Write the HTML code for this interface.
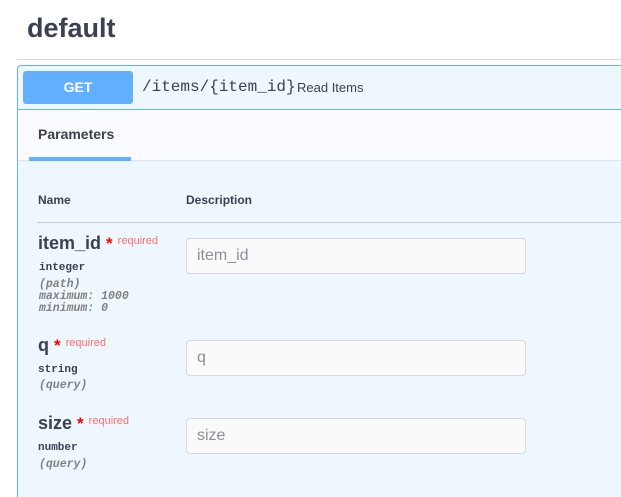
<html style="overflow:hidden;height:497px"><head><style>
body{margin:0;width:621px;height:497px;overflow:hidden;background:#fff;font-family:"Liberation Sans",sans-serif;color:#3b4151;position:relative}
.a{position:absolute}
.mono{font-family:"Liberation Mono",monospace}
.inp{position:absolute;left:186px;height:34px;border:1px solid #d9d9d9;border-radius:4px;background:#fafafa;font-size:16px;color:#8a8f99;box-sizing:content-box;line-height:34px;padding-left:10px;width:328px}
.nm{font-size:18px;font-weight:bold}
.req{color:#ff6f6f;font-size:11px;font-weight:normal}
.star{color:#f00;font-size:17px}
.t{font-size:11px;font-weight:bold;color:#3b4151}
.i{font-size:11.5px;font-style:italic;color:#808080;font-weight:bold;line-height:12px}
</style></head><body>
<div class="a" style="left:27px;top:13px;font-size:27px;font-weight:bold">default</div>
<div class="a" style="left:17px;top:59px;width:604px;height:1px;background:#d4d6da"></div>
<div class="a" style="left:17px;top:65px;width:610px;height:440px;border:1px solid #61affe;border-bottom:none;border-radius:4px 4px 0 0;background:#eef6fe"></div>
<div class="a" style="left:18px;top:66px;width:603px;height:43px;border-bottom:1px solid #61affe"></div>
<div class="a" style="left:23px;top:71px;width:110px;height:33px;background:#61affe;border-radius:3px;color:#fff;font-weight:bold;font-size:14px;text-align:center;line-height:33px">GET</div>
<div class="a mono" style="left:142px;top:78px;font-size:16px;color:#3b4151">/items/{item_id}</div>
<div class="a" style="left:297px;top:80px;font-size:13px">Read Items</div>
<div class="a" style="left:18px;top:110px;width:603px;height:50px;background:#f9fbfe;border-bottom:1px solid #dfe4ea"></div>
<div class="a" style="left:38px;top:126px;font-size:14px;font-weight:bold">Parameters</div>
<div class="a" style="left:29px;top:157px;width:102px;height:4px;background:#61affe"></div>
<div class="a" style="left:38px;top:193px;font-size:12px;font-weight:bold">Name</div>
<div class="a" style="left:186px;top:193px;font-size:12px;font-weight:bold">Description</div>
<div class="a" style="left:37px;top:222px;width:584px;height:1px;background:#c8ccd4"></div>

<div class="a nm" style="left:38px;top:233px">item_id <span class="star">*</span> <span class="req" style="position:relative;top:-5px">required</span></div>
<div class="a mono t" style="left:39px;top:262px">integer</div>
<div class="a mono i" style="left:39px;top:279px">(path)<br>maximum: 1000<br>minimum: 0</div>
<div class="inp" style="top:238px">item_id</div>

<div class="a nm" style="left:38px;top:335px">q <span class="star">*</span> <span class="req" style="position:relative;top:-5px">required</span></div>
<div class="a mono t" style="left:38px;top:364px">string</div>
<div class="a mono i" style="left:39px;top:380px">(query)</div>
<div class="inp" style="top:340px">q</div>

<div class="a nm" style="left:38px;top:413px">size <span class="star">*</span> <span class="req" style="position:relative;top:-5px">required</span></div>
<div class="a mono t" style="left:38px;top:442px">number</div>
<div class="a mono i" style="left:39px;top:459px">(query)</div>
<div class="inp" style="top:418px">size</div>
</body></html>
